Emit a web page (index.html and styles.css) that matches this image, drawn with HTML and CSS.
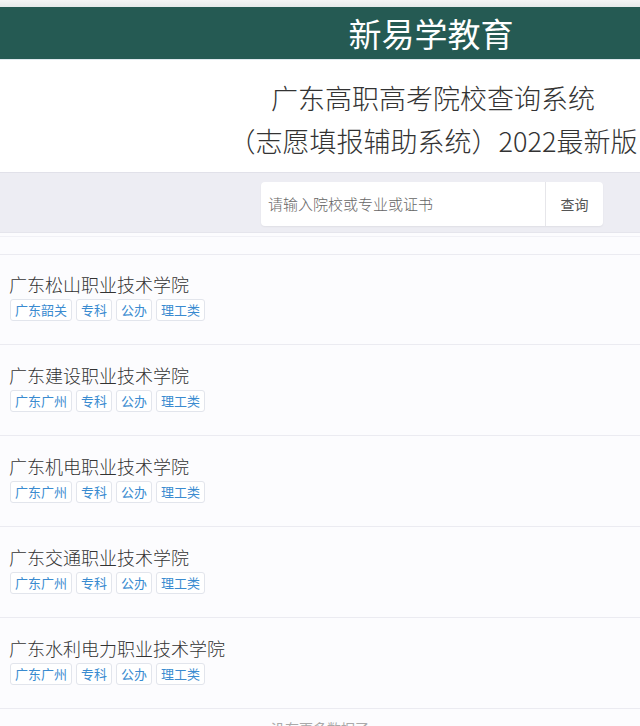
FILE: index.html
```html
<!DOCTYPE html>
<html lang="zh-CN">
<head>
<meta charset="utf-8">
<title>广东高职高考院校查询系统</title>
<link rel="stylesheet" href="styles.css">
</head>
<body>
<div class="topstrip"></div>
<header class="brand">新易学教育</header>
<section class="title">
  <div class="title-line">广东高职高考院校查询系统</div>
  <div class="title-line">（志愿填报辅助系统）2022最新版</div>
</section>
<section class="searchbar">
  <div class="search">
    <div class="search-input">请输入院校或专业或证书</div>
    <div class="search-btn">查询</div>
  </div>
</section>
<main class="list">
  <div class="list-top"></div>
  <div class="item item-first">
    <div class="name">广东松山职业技术学院</div>
    <div class="tags"><span class="tag">广东韶关</span><span class="tag">专科</span><span class="tag">公办</span><span class="tag">理工类</span></div>
  </div>
  <div class="item">
    <div class="name">广东建设职业技术学院</div>
    <div class="tags"><span class="tag">广东广州</span><span class="tag">专科</span><span class="tag">公办</span><span class="tag">理工类</span></div>
  </div>
  <div class="item">
    <div class="name">广东机电职业技术学院</div>
    <div class="tags"><span class="tag">广东广州</span><span class="tag">专科</span><span class="tag">公办</span><span class="tag">理工类</span></div>
  </div>
  <div class="item">
    <div class="name">广东交通职业技术学院</div>
    <div class="tags"><span class="tag">广东广州</span><span class="tag">专科</span><span class="tag">公办</span><span class="tag">理工类</span></div>
  </div>
  <div class="item">
    <div class="name">广东水利电力职业技术学院</div>
    <div class="tags"><span class="tag">广东广州</span><span class="tag">专科</span><span class="tag">公办</span><span class="tag">理工类</span></div>
  </div>
  <div class="more">没有更多数据了</div>
</main>
</body>
</html>
```
FILE: styles.css
```css
* { box-sizing: border-box; }
html, body { margin: 0; padding: 0; }
body {
  width: 640px;
  height: 726px;
  overflow: hidden;
  background: #fcfcfe;
  font-family: "Noto Sans CJK SC", "Noto Sans", sans-serif;
  color: #333;
}
.topstrip {
  height: 7px;
  background: linear-gradient(#f4f5f5, #e6eaea);
}
.brand {
  height: 53px;
  background: #255a53;
  border-bottom: 1px solid #dfe9ee;
  color: #fff;
  font-size: 33px;
  line-height: 52px;
  text-align: center;
  padding-left: 222px;
}
.title {
  background: #fff;
  height: 112px;
  padding: 16px 0 0 226px;
  text-align: center;
  white-space: nowrap;
}
.title-line {
  font-size: 27px;
  font-weight: 300;
  line-height: 43px;
  color: #333;
}
.searchbar {
  height: 61px;
  background: #ededf3;
  border-top: 1px solid #e1e1e9;
  border-bottom: 1px solid #e5e5ec;
  display: flex;
  justify-content: flex-end;
  padding: 9px 37px 0 0;
}
.search {
  width: 342px;
  height: 44px;
  background: #fff;
  border-radius: 4px;
  box-shadow: 0 1px 2px rgba(0, 0, 0, 0.06);
  display: flex;
  align-items: stretch;
}
.search-input {
  flex: 1;
  padding-left: 7px;
  font-size: 15px;
  font-weight: 300;
  line-height: 44px;
  color: #666;
  border-right: 1px solid #e6e6ea;
}
.search-btn {
  width: 57px;
  text-align: center;
  font-size: 14px;
  line-height: 44px;
  color: #555;
}
.list-top {
  margin-top: 3px;
  height: 19px;
  border-top: 1px solid #f1f1f6;
  border-bottom: 1px solid #ebebf1;
}
.item {
  padding: 18px 9px 23px;
  border-bottom: 1px solid #ebebf1;
}
.item-first {
  padding-top: 17px;
}
.name {
  font-size: 18px;
  font-weight: 300;
  line-height: 24px;
  color: #333;
  margin-bottom: 3px;
}
.tags {
  display: flex;
  gap: 4px;
  padding-left: 1px;
}
.tag {
  height: 22px;
  padding: 0 4px;
  border: 1px solid #e2e5ec;
  border-radius: 3px;
  background: #fff;
  font-size: 13px;
  line-height: 20px;
  color: #3a8bd0;
}
.more {
  padding-top: 9px;
  text-align: center;
  font-size: 14px;
  line-height: 20px;
  color: #aaa;
}
```
